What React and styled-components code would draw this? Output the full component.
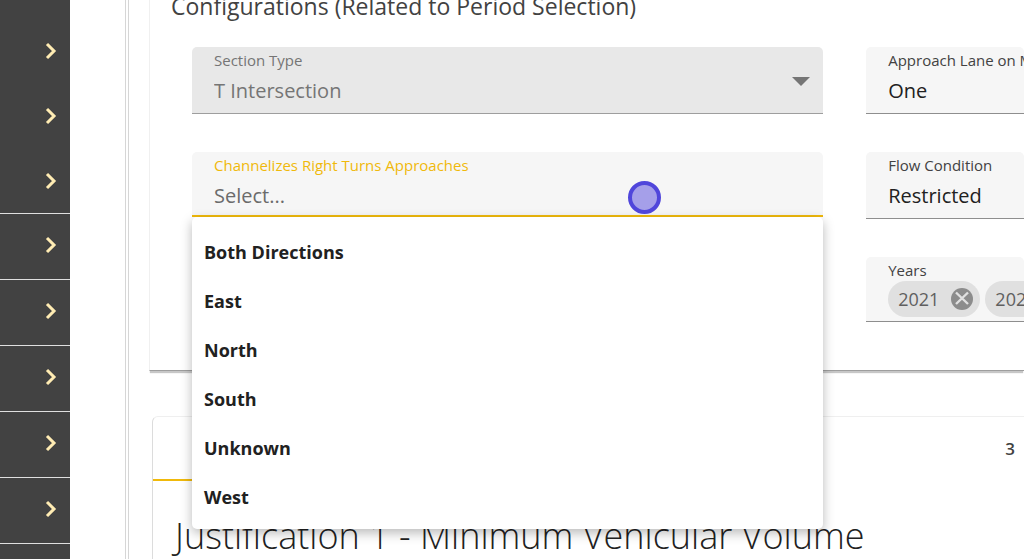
import React, { useState } from 'react';
import styled, { createGlobalStyle, css } from 'styled-components';

const fontStack = '"Open Sans", "Noto Sans", sans-serif';
const accentColor = '#f0b90b';
const sidebarColor = '#424242';
const textColor = '#212121';

const GlobalStyle = createGlobalStyle`
  * {
    box-sizing: border-box;
  }

  body {
    margin: 0;
    overflow: hidden;
    background: #fff;
    color: ${textColor};
    font-family: ${fontStack};
  }
`;

const Page = styled.div`
  display: flex;
  height: 100vh;
  overflow: hidden;
`;

const Sidebar = styled.nav`
  flex: 0 0 70px;
  padding-top: 18px;
  background: ${sidebarColor};
  overflow: hidden;
`;

const SidebarButton = styled.button`
  display: flex;
  align-items: center;
  justify-content: flex-end;
  width: 100%;
  height: ${({ $divided }) => ($divided ? '66px' : '65px')};
  padding: 0 13px ${({ $divided }) => ($divided ? '3px' : '0')} 0;
  border: 0;
  border-top: ${({ $divided }) => ($divided ? '1px solid #e0e0e0' : '0')};
  background: transparent;
  color: #ffecb3;
  cursor: pointer;
`;

const Main = styled.main`
  flex: 1;
  min-width: 0;
  margin-left: 55px;
  padding-left: 20px;
  border-left: 4px double #d6d6d6;
`;

const Panel = styled.section`
  padding: 0 0 48px 42px;
  border-left: 1px solid #f0f0f0;
  border-bottom: 1px solid #9e9e9e;
  box-shadow: 0 3px 1px -1px rgba(0, 0, 0, 0.22);
`;

const PanelTitle = styled.h2`
  margin: 0 0 35px -21px;
  font-size: 23px;
  font-weight: 400;
  line-height: 12px;
  color: #424242;
  white-space: nowrap;
`;

const FieldGrid = styled.div`
  display: grid;
  grid-template-columns: minmax(0, 4fr) minmax(0, 1fr);
  gap: 38px 43px;
`;

const FieldCell = styled.div`
  position: relative;
`;

const Field = styled.div`
  position: relative;
  height: ${({ $compact }) => ($compact ? '65px' : '67px')};
  padding: 3px 0 0 22px;
  overflow: hidden;
  border-bottom: 1px solid #8e8e8e;
  border-radius: 5px 5px 0 0;
  background: #f6f6f6;

  ${({ $disabled }) => $disabled && css`
    background: #e8e8e8;
    border-bottom-color: #9e9e9e;
  `}

  ${({ $focused }) => $focused && css`
    border-bottom: 2px solid ${accentColor};
  `}
`;

const FieldLabel = styled.label`
  display: block;
  font-size: 15px;
  line-height: 20px;
  white-space: nowrap;
  color: ${({ $tone }) => $tone || '#424242'};
`;

const controlStyle = css`
  display: block;
  width: 100%;
  height: 32px;
  margin-top: 4px;
  padding: 0;
  border: 0;
  outline: 0;
  background: transparent;
  font-family: inherit;
  font-size: 20px;
  color: ${textColor};
`;

const Select = styled.select`
  ${controlStyle}
  appearance: none;
  opacity: 1;

  &:disabled {
    color: #757575;
  }
`;

const ComboInput = styled.input`
  ${controlStyle}

  &::placeholder {
    color: #6b6b6b;
    opacity: 1;
  }
`;

const Caret = styled.span`
  position: absolute;
  top: 30px;
  right: 13px;
  border: 9px solid transparent;
  border-top-color: #757575;
  border-bottom: 0;
  pointer-events: none;
`;

const Menu = styled.ul`
  position: absolute;
  z-index: 2;
  top: 65px;
  left: 0;
  right: 0;
  margin: 0;
  padding: 11px 0 7px;
  list-style: none;
  border-radius: 5px;
  background: #fff;
  box-shadow: 0 4px 12px rgba(0, 0, 0, 0.28);
`;

const MenuItem = styled.li`
  padding: 0 12px;
  font-size: 18px;
  font-weight: 700;
  line-height: 49px;
  cursor: pointer;
`;

const Pointer = styled.span`
  position: absolute;
  z-index: 3;
  top: 29px;
  left: 436px;
  width: 33px;
  height: 33px;
  border: 4px solid #5046db;
  border-radius: 50%;
  background: #a59fe9;
  pointer-events: none;
`;

const ChipRow = styled.div`
  display: flex;
  gap: 5px;
  margin-top: 1px;
`;

const Chip = styled.span`
  display: flex;
  flex: none;
  align-items: center;
  gap: 12px;
  height: 36px;
  padding: 0 7px 0 10px;
  border-radius: 18px;
  background: #e0e0e0;
  color: #5f5f5f;
  font-size: 18px;
`;

const ChipRemove = styled.button`
  display: flex;
  padding: 0;
  border: 0;
  background: transparent;
  cursor: pointer;
`;

const Card = styled.section`
  margin: 45px 0 0 3px;
  border-top: 1px solid #efefef;
  border-left: 1px solid #dcdcdc;
  border-top-left-radius: 6px;
`;

const TabBar = styled.div`
  display: flex;
  justify-content: space-between;
  height: 64px;
`;

const Tab = styled.button`
  flex: ${({ $active }) => ($active ? '0 0 33%' : '0 0 28px')};
  padding: 0;
  border: 0;
  border-bottom: 2px solid ${({ $active }) => ($active ? accentColor : 'transparent')};
  background: transparent;
  color: #424242;
  font-family: inherit;
  font-size: 17px;
  font-weight: 600;
  cursor: pointer;
`;

const CardTitle = styled.h1`
  margin: 29px 0 0 22px;
  font-size: 36px;
  font-weight: 300;
  line-height: 52px;
  white-space: nowrap;
`;

const directions = ['Both Directions', 'East', 'North', 'South', 'Unknown', 'West'];
const sidebarItems = [false, false, false, true, true, true, true, true, true];

function ChevronIcon() {
  return (
    <svg width="12" height="18" viewBox="0 0 12 18" fill="none">
      <path d="M2 2 L9 9 L2 16" stroke="currentColor" strokeWidth="3" />
    </svg>
  );
}

function RemoveIcon() {
  return (
    <svg width="22" height="22" viewBox="0 0 22 22">
      <circle cx="11" cy="11" r="11" fill="#8c8c8c" />
      <path d="M5 4.5 L17 16 M17 4.5 L5 16" stroke="#e0e0e0" strokeWidth="2.4" />
    </svg>
  );
}

function SelectField({ id, label, value, disabled }) {
  return (
    <Field $disabled={disabled}>
      <FieldLabel htmlFor={id} $tone={disabled ? '#757575' : undefined}>{label}</FieldLabel>
      <Select id={id} disabled={disabled} defaultValue={value}>
        <option>{value}</option>
      </Select>
      {disabled && <Caret />}
    </Field>
  );
}

function DirectionField() {
  const [direction, setDirection] = useState('');

  return (
    <FieldCell>
      <Field $compact $focused>
        <FieldLabel htmlFor="channelizes" $tone={accentColor}>Channelizes Right Turns Approaches</FieldLabel>
        <ComboInput
          id="channelizes"
          role="combobox"
          aria-expanded="true"
          aria-controls="direction-list"
          placeholder="Select..."
          value={direction}
          onChange={(e) => setDirection(e.target.value)}
        />
      </Field>
      <Menu id="direction-list" role="listbox">
        {directions.map((name) => (
          <MenuItem key={name} role="option" aria-selected={name === direction} onClick={() => setDirection(name)}>
            {name}
          </MenuItem>
        ))}
      </Menu>
      <Pointer />
    </FieldCell>
  );
}

function YearsField() {
  const [years, setYears] = useState(['2021', '2022']);

  return (
    <Field $compact role="group" aria-labelledby="years-label">
      <FieldLabel as="span" id="years-label">Years</FieldLabel>
      <ChipRow>
        {years.map((year) => (
          <Chip key={year}>
            {year}
            <ChipRemove aria-label={`Remove ${year}`} onClick={() => setYears(years.filter((y) => y !== year))}>
              <RemoveIcon />
            </ChipRemove>
          </Chip>
        ))}
      </ChipRow>
    </Field>
  );
}

function App() {
  return (
    <Page>
      <GlobalStyle />
      <Sidebar aria-label="Sections">
        {sidebarItems.map((divided, index) => (
          <SidebarButton key={index} $divided={divided} aria-label={`Expand section ${index + 1}`}>
            <ChevronIcon />
          </SidebarButton>
        ))}
      </Sidebar>
      <Main>
        <Panel>
          <PanelTitle>Configurations (Related to Period Selection)</PanelTitle>
          <FieldGrid>
            <SelectField id="section-type" label="Section Type" value="T Intersection" disabled />
            <SelectField id="approach-lane" label="Approach Lane on M" value="One" />
            <DirectionField />
            <SelectField id="flow-condition" label="Flow Condition" value="Restricted" />
            <Field $compact />
            <YearsField />
          </FieldGrid>
        </Panel>
        <Card>
          <TabBar role="tablist">
            <Tab role="tab" aria-selected="true" aria-label="Justification 1" $active />
            <Tab role="tab" aria-selected="false">3</Tab>
          </TabBar>
          <CardTitle>Justification 1 - Minimum Vehicular Volume</CardTitle>
        </Card>
      </Main>
    </Page>
  );
}

export default App;
